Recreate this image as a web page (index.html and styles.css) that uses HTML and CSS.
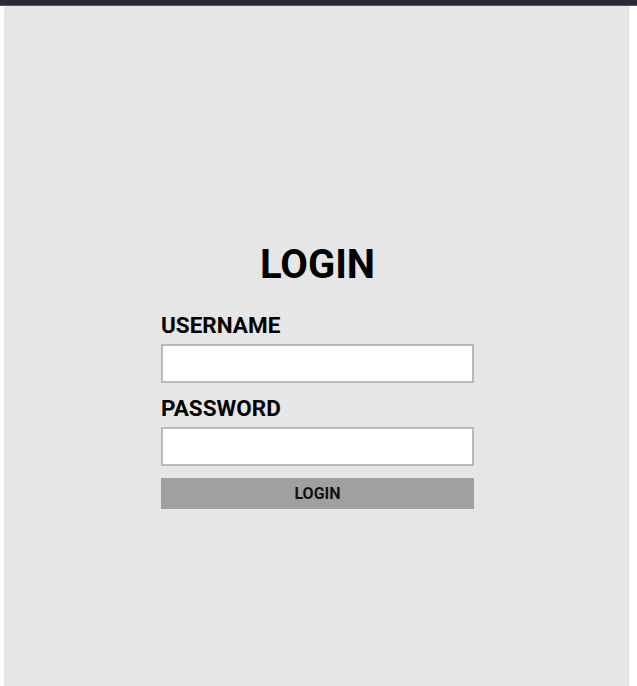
FILE: index.html
```html
<!DOCTYPE html>
<html lang="en">

<head>
    <meta charset="UTF-8">
    <meta name="viewport" content="width=device-width, initial-scale=1.0">
    <title>Login</title>

    <link rel="stylesheet" href="styles.css">
</head>

<body>
    <div class="topbar"></div>
    <div class="page">
        <div class="login">
            <h1>LOGIN</h1>
            <form id="login-form">
                <label for="username">USERNAME</label>
                <input type="text" id="username">
                <label for="password">PASSWORD</label>
                <input type="password" id="password">
                <button type="submit" class="login-btn">LOGIN</button>
            </form>
        </div>
    </div>
</body>

</html>
```

FILE: styles.css
```css
* {
    box-sizing: border-box;
    margin: 0;
    font-family: Roboto, "Liberation Sans", Arial, sans-serif;
}

body {
    background: white;
    color: black;
}

.topbar {
    height: 6px;
    background-color: rgb(43, 42, 51);
    border-bottom: 1px solid rgb(90, 88, 102);
}

.page {
    width: 625px;
    margin-left: 4px;
    min-height: calc(100vh - 6px);
    background-color: rgb(230, 230, 230);
    border-right: 1px solid rgb(222, 222, 222);
    padding-top: 235px;
}

.login {
    width: 313px;
    margin-left: 157px;
}

.login h1 {
    text-align: center;
    font-size: 40px;
    line-height: 48px;
    font-weight: 700;
    margin-bottom: 23px;
}

#login-form {
    display: flex;
    flex-direction: column;
}

#login-form label {
    font-size: 22.5px;
    line-height: 26px;
    font-weight: 700;
    margin-bottom: 6px;
}

#login-form input {
    height: 39px;
    border: 2px solid rgb(186, 186, 186);
    background: white;
    outline: none;
    margin-bottom: 12px;
    padding: 0 8px;
    font-size: 16px;
}

.login-btn {
    height: 31px;
    border: none;
    background-color: rgb(160, 160, 160);
    color: rgb(17, 17, 17);
    font-size: 16px;
    font-weight: 700;
    cursor: pointer;
}
```
